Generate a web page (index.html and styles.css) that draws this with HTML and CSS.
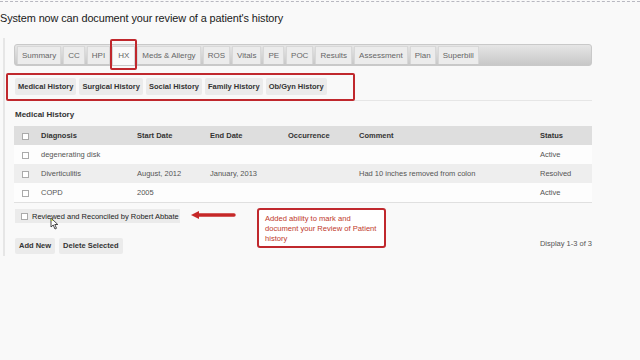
FILE: index.html
```html
<!DOCTYPE html>
<html lang="en">
  <head>
    <meta charset="UTF-8" />
    <title>Patient History</title>
    <link rel="stylesheet" href="styles.css">
  </head>
  <body>
    <div class="top-line"></div>
    <h1 class="slide-title">System now can document your review of a patient's history</h1>
    <div class="chart-page">
      <div class="tab-bar">
        <span class="tab">Summary</span>
        <span class="tab">CC</span>
        <span class="tab">HPI</span>
        <span class="tab active">HX<span class="tab-mark"></span></span>
        <span class="tab">Meds &amp; Allergy</span>
        <span class="tab">ROS</span>
        <span class="tab">Vitals</span>
        <span class="tab">PE</span>
        <span class="tab">POC</span>
        <span class="tab">Results</span>
        <span class="tab">Assessment</span>
        <span class="tab">Plan</span>
        <span class="tab">Superbill</span>
      </div>

      <div class="sub-tabs">
        <span class="sub-mark"></span>
        <span class="sub-tab">Medical History</span>
        <span class="sub-tab">Surgical History</span>
        <span class="sub-tab">Social History</span>
        <span class="sub-tab">Family History</span>
        <span class="sub-tab">Ob/Gyn History</span>
      </div>

      <h2 class="section-title">Medical History</h2>

      <table class="history-table">
        <thead>
          <tr>
            <th class="check-col"><span class="check"></span></th>
            <th class="c-diag">Diagnosis</th>
            <th class="c-start">Start Date</th>
            <th class="c-end">End Date</th>
            <th class="c-occ">Occurrence</th>
            <th class="c-comment">Comment</th>
            <th>Status</th>
          </tr>
        </thead>
        <tbody>
          <tr>
            <td class="check-col"><span class="check"></span></td>
            <td>degenerating disk</td>
            <td></td>
            <td></td>
            <td></td>
            <td></td>
            <td>Active</td>
          </tr>
          <tr class="alt">
            <td class="check-col"><span class="check"></span></td>
            <td>Diverticulitis</td>
            <td>August, 2012</td>
            <td>January, 2013</td>
            <td></td>
            <td>Had 10 inches removed from colon</td>
            <td>Resolved</td>
          </tr>
          <tr>
            <td class="check-col"><span class="check"></span></td>
            <td>COPD</td>
            <td>2005</td>
            <td></td>
            <td></td>
            <td></td>
            <td>Active</td>
          </tr>
        </tbody>
      </table>

      <div class="review-row">
        <label class="reviewed"><span class="check"></span>Reviewed and Reconciled by Robert Abbate</label>
        <svg class="cursor" width="9" height="13" viewBox="0 0 9 13">
          <path d="M1 1 L1 10 L3.2 8 L5 12 L6.5 11.3 L4.8 7.5 L7.8 7.5 Z" fill="#fff" stroke="#333" stroke-width="0.9" />
          <path d="M1 1 L1 4 L3 4 Z" fill="#b5c93a" />
        </svg>
        <svg class="arrow" width="46" height="10" viewBox="0 0 46 10">
          <path d="M1 5 L9 1 L9 9 Z" fill="#c62828" />
          <path d="M8 5 L44 5" stroke="#c62828" stroke-width="3.4" stroke-linecap="round" />
        </svg>
        <div class="note">Added ability to mark and document your Review of Patient history</div>
      </div>

      <div class="actions">
        <div class="buttons">
          <span class="btn">Add New</span>
          <span class="btn">Delete Selected</span>
        </div>
        <span class="count">Display 1-3 of 3</span>
      </div>
    </div>
  </body>
</html>
```

FILE: styles.css
```css
body {
  margin: 0;
  background-color: #f9f9f9;
  font-family: Arial, "Liberation Sans", sans-serif;
  color: #333;
  width: 640px;
  height: 360px;
  overflow: hidden;
}

.top-line {
  margin-top: 1px;
  border-top: 1px dashed #b8b8c0;
}

.slide-title {
  font-size: 10.9px;
  font-weight: 400;
  color: #1a1a1a;
  margin: 9px 0 0 0;
  line-height: 14px;
  letter-spacing: -0.1px;
}

.chart-page {
  margin: 13px 0 0 3px;
  border-left: 2px solid #e6e6e6;
  padding: 6px 0 0 9px;
  width: 578px;
  height: 212px;
  font-size: 7.5px;
}

/* tabs */
.tab-bar {
  display: flex;
  align-items: flex-end;
  height: 22px;
  box-sizing: border-box;
  padding: 0 0 0 2px;
  border: 1px solid #c9c9c9;
  border-radius: 3px;
  background: linear-gradient(#e6e6e6, #c8c8c8);
}
.tab {
  position: relative;
  height: 18px;
  line-height: 18px;
  padding: 0 4px;
  margin-right: 2px;
  margin-bottom: 1px;
  background-color: #ececec;
  border: 1px solid #d8d8d8;
  border-bottom: none;
  box-sizing: border-box;
  color: #666;
  font-size: 8px;
}
.tab.active {
  background-color: #fafafa;
  height: 19px;
  margin-bottom: 0;
  padding: 0 5px;
}
.tab-mark {
  position: absolute;
  left: -3px;
  right: -3px;
  top: -8px;
  bottom: -5px;
  border: 2px solid #c0282d;
  border-radius: 2px;
}

/* history sub-tabs */
.sub-tabs {
  position: relative;
  display: flex;
  gap: 3px;
  margin-top: 12px;
  padding: 0 0 5px 1px;
  border-bottom: 1px solid #e6e6e6;
}
.sub-tab {
  height: 17px;
  line-height: 17px;
  padding: 0 3px;
  background-color: #ebebeb;
  border-radius: 2px;
  font-weight: 700;
  color: #333;
}
.sub-mark {
  position: absolute;
  left: -8px;
  top: -5px;
  width: 349px;
  height: 28px;
  box-sizing: border-box;
  border: 2px solid #c0282d;
  border-radius: 2px;
}

.section-title {
  font-size: 8px;
  font-weight: 700;
  color: #333;
  margin: 9px 0 0 1px;
  line-height: 10px;
}

/* table */
.history-table {
  margin-top: 6px;
  width: 578px;
  border-collapse: collapse;
  table-layout: fixed;
  font-size: 7.5px;
  color: #555;
  border-bottom: 1px solid #e0e0e0;
}
.history-table th,
.history-table td {
  height: 19px;
  padding: 0 0 0 5px;
  text-align: left;
  white-space: nowrap;
}
.history-table th {
  background-color: #dedede;
  font-weight: 700;
  color: #333;
}
.history-table tbody tr {
  background-color: #fdfdfd;
}
.history-table tbody tr.alt {
  background-color: #eeeeee;
}
.history-table .check-col {
  width: 17px;
  padding-left: 5px;
}
.history-table .c-diag { width: 91px; }
.history-table .c-start { width: 68px; }
.history-table .c-end { width: 73px; }
.history-table .c-occ { width: 66px; }
.history-table .c-comment { width: 176px; }

.check {
  display: inline-block;
  width: 5px;
  height: 5px;
  border: 1px solid #aaa;
  background-color: #fff;
  vertical-align: middle;
  margin-left: 3px;
}

/* review */
.review-row {
  position: relative;
  margin-top: 6px;
  height: 14px;
}
.reviewed {
  display: inline-flex;
  align-items: center;
  height: 14px;
  width: 165px;
  margin-left: 1px;
  background-color: #ebebeb;
  color: #222;
  font-size: 7.5px;
}
.reviewed .check {
  margin: 0 4px 0 6px;
}
.cursor {
  position: absolute;
  left: 36px;
  top: 8px;
}
.arrow {
  position: absolute;
  left: 176px;
  top: 1px;
}
.note {
  position: absolute;
  left: 243px;
  top: -1px;
  width: 129px;
  height: 40px;
  box-sizing: border-box;
  padding: 4px 6px;
  border: 2px solid #c0282d;
  border-radius: 3px;
  background-color: #fff;
  color: #c0392b;
  font-size: 7.6px;
  line-height: 10px;
}

.actions {
  display: flex;
  justify-content: space-between;
  align-items: center;
  margin-top: 15px;
}
.buttons {
  display: flex;
  gap: 4px;
  margin-left: 1px;
}
.btn {
  height: 16px;
  line-height: 16px;
  padding: 0 4px;
  background-color: #ebebeb;
  border-radius: 2px;
  font-weight: 700;
  color: #333;
}
.count {
  color: #555;
  font-size: 7.5px;
  margin-top: -6px;
}
```
